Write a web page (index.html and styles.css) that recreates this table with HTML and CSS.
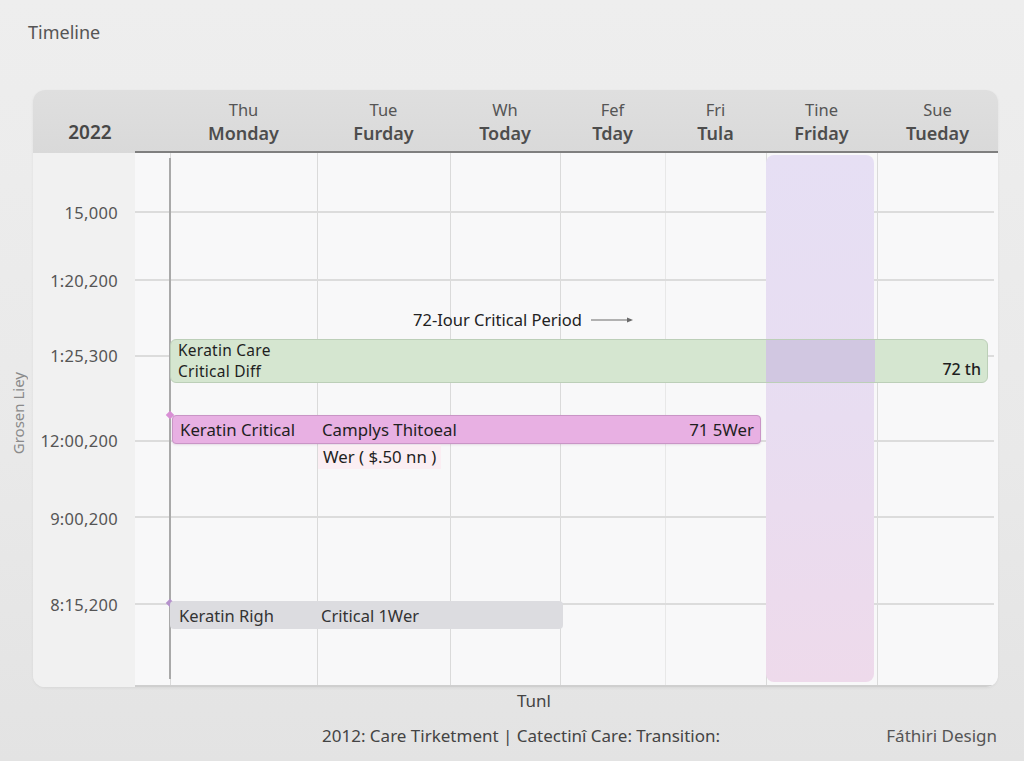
FILE: index.html
```
<!DOCTYPE html>
<html>
<head>
<meta charset="utf-8">
<link rel="stylesheet" href="styles.css">
</head>
<body>
<div class="page">
  <div class="title">Timeline</div>
  <div class="chart-wrap">
    <div class="side-label"><span>Grosen Liey</span></div>
    <div class="card">
      <div class="head">
        <div class="year">2022</div>
        <div class="gap"></div>
        <div class="day"><span class="d1">Thu</span><span class="d2">Monday</span></div>
        <div class="day"><span class="d1">Tue</span><span class="d2">Furday</span></div>
        <div class="day"><span class="d1">Wh</span><span class="d2">Today</span></div>
        <div class="day"><span class="d1">Fef</span><span class="d2">Tday</span></div>
        <div class="day"><span class="d1">Fri</span><span class="d2">Tula</span></div>
        <div class="day"><span class="d1">Tine</span><span class="d2">Friday</span></div>
        <div class="day"><span class="d1">Sue</span><span class="d2">Tueday</span></div>
      </div>
      <div class="body">
        <div class="ylabels">
          <div class="yl y1">15,000</div>
          <div class="yl y2">1:20,200</div>
          <div class="yl y3">1:25,300</div>
          <div class="yl y4">12:00,200</div>
          <div class="yl y5">9:00,200</div>
          <div class="yl y6">8:15,200</div>
        </div>
        <div class="canvas">
          <div class="col first"></div>
          <div class="col"></div>
          <div class="col"></div>
          <div class="col"></div>
          <div class="col"></div>
          <div class="col faint"></div>
          <div class="col"></div>
          <div class="col"></div>

          <div class="hline h1"></div>
          <div class="hline h2"></div>
          <div class="hline h3"></div>
          <div class="hline h4"></div>
          <div class="hline h5"></div>
          <div class="hline h6"></div>

          <div class="highlight"></div>
          <div class="axis"></div>

          <div class="period">72-Iour Critical Period
            <svg class="arrow" width="44" height="8" viewBox="0 0 44 8"><line x1="0" y1="4" x2="40" y2="4" stroke="#6a6a6a" stroke-width="1.2"/><path d="M36 1.5 L42 4 L36 6.5 Z" fill="#6a6a6a"/></svg>
          </div>

          <div class="bar green">
            <div class="bar-text">
              <div class="bl">Keratin Care</div>
              <div class="bl">Critical Diff</div>
            </div>
            <div class="bar-end">72 th</div>
          </div>

          <div class="dot pinkdot"></div>
          <div class="bar pink">
            <span class="c1">Keratin Critical</span>
            <span class="c2">Camplys Thitoeal</span>
            <span class="c3">71 5Wer</span>
          </div>
          <div class="note">Wer ( $.50 nn )</div>

          <div class="dot purpledot"></div>
          <div class="bar gray">
            <span class="c1">Keratin Righ</span>
            <span class="c2">Critical 1Wer</span>
          </div>
        </div>
      </div>
    </div>
  </div>
  <div class="axis-title">Tunl</div>
  <div class="footer">
    <span>2012: Care Tirketment | Catectinî Care: Transition:</span>
    <span class="brand">Fáthiri Design</span>
  </div>
</div>
</body>
</html>
```

FILE: styles.css
```
* { box-sizing: border-box; }
html, body { margin: 0; padding: 0; }
body {
  width: 1024px;
  height: 761px;
  overflow: hidden;
  background: linear-gradient(180deg, #eeeeee 0%, #e9e9e9 60%, #e3e3e3 100%);
  font-family: "Noto Sans", "Open Sans", sans-serif;
  color: #222;
}
.page { width: 1024px; height: 761px; }
.title {
  padding: 21px 0 0 28px;
  font-size: 18px;
  line-height: 22px;
  color: #555;
}
.chart-wrap {
  display: flex;
  margin-top: 47px;
}
.side-label {
  width: 33px;
  height: 597px;
  display: flex;
  align-items: center;
  justify-content: center;
  padding-top: 50px;
  padding-left: 3px;
}
.side-label span {
  writing-mode: vertical-rl;
  transform: rotate(180deg);
  font-size: 15px;
  line-height: 16px;
  color: #8a8a8a;
}
.card {
  width: 965px;
  height: 597px;
  border-radius: 12px;
  overflow: hidden;
  background: #f1f1f1;
  box-shadow: 0 1px 3px rgba(0,0,0,0.06);
  display: flex;
  flex-direction: column;
}
.head {
  height: 63px;
  background: linear-gradient(180deg, #dfdfdf, #d9d9d9);
  display: grid;
  grid-template-columns: 102px 35px 147px 133px 110px 105px 101px 111px 121px;
}
.year {
  display: flex;
  align-items: flex-end;
  justify-content: center;
  padding-bottom: 8px;
  padding-left: 12px;
  font-size: 19px;
  font-weight: 600;
  color: #474747;
}
.gap, .day { border-bottom: 2px solid #7f7f7f; }
.day {
  display: flex;
  flex-direction: column;
  align-items: center;
  padding-top: 8px;
}
.d1 { font-size: 16.5px; line-height: 24px; color: #555; }
.d2 { font-size: 18px; line-height: 22px; font-weight: 600; color: #4d4d4d; }

.body {
  flex: 1;
  display: grid;
  grid-template-columns: 102px 1fr;
}
.ylabels {
  background: #f1f1f1;
  position: relative;
}
.yl {
  position: absolute;
  right: 17px;
  font-size: 16.5px;
  line-height: 20px;
  color: #555;
  letter-spacing: 0.3px;
}
.y1 { top: 50px; }
.y2 { top: 118px; }
.y3 { top: 193px; }
.y4 { top: 278px; }
.y5 { top: 356px; }
.y6 { top: 442px; }

.canvas {
  position: relative;
  background: #f8f8f9;
  display: grid;
  grid-template-columns: 35px 147px 133px 110px 105px 101px 111px 121px;
  border-bottom: 2px solid #cfcfcf;
}
.col { border-left: 1.5px solid #dadada; }
.col.first { border-left: none; }
.col.faint { border-left-color: #e8e8e8; }

.hline {
  position: absolute;
  left: 0;
  right: 4px;
  height: 2px;
  background: #dcdcdc;
}
.h1 { top: 58px; }
.h2 { top: 126px; }
.h3 { top: 202px; }
.h4 { top: 287px; }
.h5 { top: 363px; }
.h6 { top: 450px; }

.highlight {
  position: absolute;
  left: 631px;
  width: 108px;
  top: 2px;
  bottom: 3px;
  border-radius: 8px;
  background: linear-gradient(180deg, #e6dff4 0%, #e8ddf1 50%, #eedaeb 100%);
}
.axis {
  position: absolute;
  left: 34px;
  width: 2px;
  top: 5px;
  bottom: 6px;
  background: #a9a9a9;
}
.period {
  position: absolute;
  left: 278px;
  top: 156px;
  font-size: 16.5px;
  line-height: 22px;
  color: #222;
  display: flex;
  align-items: center;
  gap: 9px;
}
.bar {
  position: absolute;
  line-height: 19px;
  color: #1f1f1f;
}
.green {
  left: 35px;
  width: 818px;
  top: 186px;
  height: 44px;
  border: 1.5px solid #bccfb8;
  border-radius: 6px;
  background: linear-gradient(90deg, #d5e6d0 0, #d5e6d0 595px, #d1c7e1 595px, #d1c7e1 704px, #d5e6d0 704px);
  display: flex;
  justify-content: space-between;
  padding: 0 6px 0 7px;
  font-size: 15.5px;
}
.bl {
  line-height: 20.5px;
  letter-spacing: 0.25px;
}
.bar-end {
  align-self: flex-end;
  padding-bottom: 3px;
  font-weight: 500;
  font-size: 16px;
}
.pink {
  left: 37px;
  width: 589px;
  top: 262px;
  height: 29px;
  background: #e8b0e3;
  border: 1px solid #c995c6;
  border-radius: 4px;
  box-shadow: 0 1px 2px rgba(120,60,120,0.15);
  display: flex;
  align-items: center;
  padding: 0 6px 0 7px;
  font-size: 16.8px;
}
.pink .c1 { width: 142px; }
.pink .c3 { margin-left: auto; }
.note {
  position: absolute;
  left: 183px;
  top: 292px;
  height: 24px;
  padding: 0 5px;
  background: #fbeef3;
  font-size: 16.8px;
  line-height: 24px;
  color: #1f1f1f;
}
.gray {
  left: 35px;
  width: 393px;
  top: 448px;
  height: 28px;
  background: #dcdce0;
  border-radius: 4px;
  display: flex;
  align-items: center;
  padding: 0 8px 0 9px;
  color: #333;
  font-size: 16.5px;
}
.gray .c1 { width: 142px; }
.dot {
  position: absolute;
  width: 6px;
  height: 6px;
  transform: rotate(45deg);
}
.pinkdot { left: 32px; top: 259px; background: #d98fd5; }
.purpledot { left: 32px; top: 447px; background: #b592cc; }

.axis-title {
  margin-top: 4px;
  padding-left: 517px;
  font-size: 17px;
  line-height: 20px;
  color: #444;
}
.footer {
  margin-top: 15px;
  display: flex;
  justify-content: space-between;
  padding: 0 27px 0 322px;
  font-size: 17px;
  line-height: 20px;
  color: #444;
}
.brand { color: #555; }
```
